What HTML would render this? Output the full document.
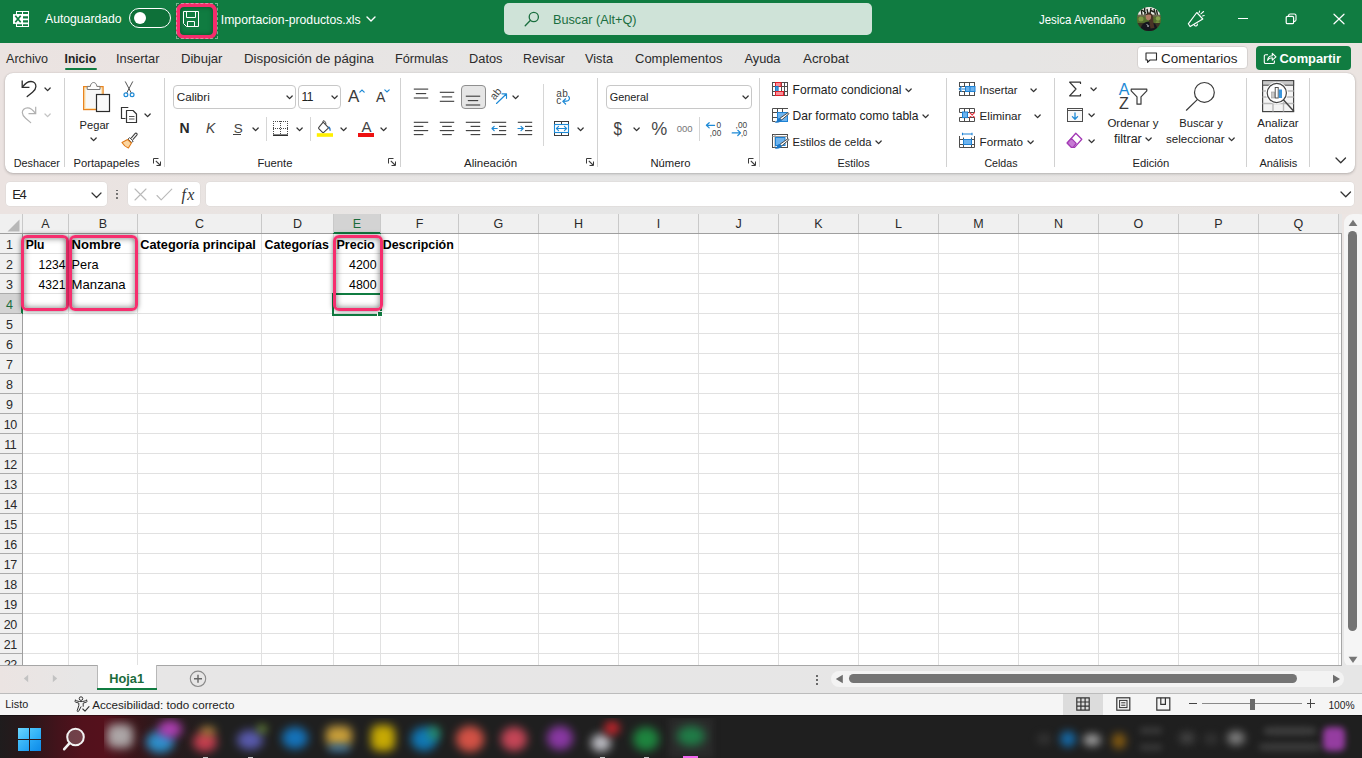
<!DOCTYPE html>
<html lang="es"><head><meta charset="utf-8"><title>Importacion-productos.xls - Excel</title>
<style>
html,body{margin:0;padding:0;}
body{width:1362px;height:758px;overflow:hidden;position:relative;background:#e6e6e6;font-family:"Liberation Sans",sans-serif;}
.t{position:absolute;white-space:nowrap;font-family:"Liberation Sans",sans-serif;}
svg{overflow:visible;}
.tx{position:absolute;left:0;top:0;}
div{box-sizing:content-box;}
</style></head><body>
<div class="" style="position:absolute;left:0px;top:0px;width:1362px;height:43px;background:#107C41;"></div>
<svg style="position:absolute;left:12px;top:10px;" width="18" height="18" viewBox="0 0 18 18" fill="none"><rect x="4" y="1" width="13" height="16" fill="#fff"/>
    <path d="M5 2h5v1.900H5zM11 2h5v1.900h-5zM11 6.300h5v2.300h-5zM11 10.200h5v2.400h-5zM5 14.200h5v1.700H5zM11 14.200h5v1.700h-5z" fill="#107C41"/>
    <rect x="1" y="4.100" width="9.600" height="9.800" fill="#fff"/>
    <path d="M3.300 5.700l5.400 6.500M8.700 5.700l-5.400 6.500" stroke="#107C41" stroke-width="1.700"/></svg>
<svg class="tx" width="1" height="1"><text x="45.0" y="23" font-family="Liberation Sans, sans-serif" font-size="12.19" letter-spacing="0.00" fill="#fff">Autoguardado</text></svg>
<div class="" style="position:absolute;left:129px;top:8px;width:40px;height:18px;border:1px solid #fff;border-radius:10px;background:#0e7039;"></div>
<div class="" style="position:absolute;left:134px;top:12px;width:12px;height:12px;border-radius:50%;background:#fff;"></div>
<div class="" style="position:absolute;left:175.8px;top:3.4px;width:33.7px;height:27.7px;border:4px solid #f72c6c;border-radius:8px;box-shadow:0 0 2px rgba(0,0,0,.3), inset 0 0 5px rgba(0,0,0,.38);"></div>
<div class="" style="position:absolute;left:175.5px;top:3px;width:42px;height:36px;border:1px dashed rgba(200,225,210,.55);box-sizing:border-box;"></div>
<svg style="position:absolute;left:183px;top:11px;" width="16" height="16" viewBox="0 0 16 16" fill="none"><path d="M.5 .5h15v15h-12l-3-3z" stroke="#fff" stroke-width="1" fill="none"/><path d="M3.500 .5v6h9v-6M4.500 15.500v-5h7v5" stroke="#fff" stroke-width="1" fill="none"/></svg>
<svg class="tx" width="1" height="1"><text x="220.8" y="24" font-family="Liberation Sans, sans-serif" font-size="12.22" letter-spacing="0.00" fill="#fff">Importacion-productos.xls</text></svg>
<svg style="position:absolute;left:365.5px;top:16.0px" width="10" height="6" viewBox="0 0 10 6" fill="none"><path d="M1 1 L5.0 5 L9 1" stroke="#fff" stroke-width="1.4" stroke-linecap="round" stroke-linejoin="round"/></svg>
<div class="" style="position:absolute;left:504px;top:3px;width:368px;height:32px;background:#cfe3d8;border-radius:5px;"></div>
<svg style="position:absolute;left:524px;top:11px;" width="16" height="16" viewBox="0 0 16 16" fill="none"><circle cx="9.8" cy="6" r="4.6" stroke="#1a6e3f" stroke-width="1.3"/><path d="M6.5 9.3L1.2 14.8" stroke="#1a6e3f" stroke-width="1.3" stroke-linecap="round"/></svg>
<svg class="tx" width="1" height="1"><text x="553.0" y="24" font-family="Liberation Sans, sans-serif" font-size="12.7" letter-spacing="-0.00" fill="#1a6e3f">Buscar (Alt+Q)</text></svg>
<svg class="tx" width="1" height="1"><text x="1038.9" y="24" font-family="Liberation Sans, sans-serif" font-size="12.15" letter-spacing="0.00" fill="#fff" textLength="86.60" lengthAdjust="spacingAndGlyphs">Jesica Avendaño</text></svg>
<svg style="position:absolute;left:1137px;top:7px;" width="24" height="24" viewBox="0 0 24 24" fill="none"><defs><clipPath id="avc"><circle cx="12" cy="12" r="12"/></clipPath></defs>
    <g clip-path="url(#avc)"><rect width="24" height="24" fill="#4c5a30"/>
    <rect width="24" height="8" fill="#e9ebe6"/>
    <path d="M4 1l1 7M7.500 0l.5 8M10 2l1 5M14 1l-1 6M17 2l1.500 6M19.500 3l1 5M5 3l4 3M13 3l4 2" stroke="#1d2218" stroke-width="1.400"/>
    <rect y="7.600" width="24" height="2.200" fill="#6e6a52"/>
    <rect y="9.800" width="24" height="8" fill="#55702e"/>
    <circle cx="4" cy="12" r="2.500" fill="#7c9a44"/><circle cx="21" cy="11.500" r="2.200" fill="#86a34e"/><circle cx="20.500" cy="16" r="2" fill="#6f8c3c"/>
    <rect y="16" width="24" height="8" fill="#3a3424"/>
    <path d="M3.500 24c0-6 3.500-9.500 8.500-9.500s8.500 3.500 8.500 9.500z" fill="#15171e"/>
    <path d="M12.500 6.500c3 0 4 2.500 3.800 5.500-.2 3 .5 6 1.200 9l-4 .5-1.500-8z" fill="#4a3326"/>
    <ellipse cx="11.400" cy="9.800" rx="2.700" ry="3.400" fill="#b07a66"/>
    <path d="M8.700 8.200c.5-2 2-2.900 3.700-2.700 1.500.2 2.300 1.200 2.400 2.600-1.800-.8-4-.8-6.100.1z" fill="#3a2a20"/>
    <path d="M9.600 17.500l2 1.300-1 1.200" stroke="#cfd6da" stroke-width="1" fill="none"/></g></svg>
<svg style="position:absolute;left:1187px;top:10px;" width="19" height="18" viewBox="0 0 19 18" fill="none"><path d="M1.300 13.800L9.800 2.500l6 6.500L3.200 16.600z" stroke="#fff" stroke-width="1.150" stroke-linejoin="round"/>
    <path d="M7 14.400c.2 1.300 1.500 1.900 2.600 1.300.8-.4 1-1.300.7-2.100" stroke="#fff" stroke-width="1.100"/>
    <path d="M12.100 2.500l.5-1.400M13.900 3.900l2.700-2.400M15.500 6l1.700-.4" stroke="#fff" stroke-width="1.050" stroke-linecap="round"/></svg>
<div class="" style="position:absolute;left:1238px;top:18px;width:10px;height:1.2px;background:#fff;"></div>
<svg style="position:absolute;left:1285px;top:13px;" width="12" height="12" viewBox="0 0 12 12" fill="none"><rect x="1.200" y="3.400" width="7.400" height="7.300" rx="1.300" stroke="#fff" stroke-width="1.200"/><path d="M3.6 3V2.6A1.6 1.6 0 0 1 5.2 1h4.2a1.6 1.6 0 0 1 1.6 1.6v4.2a1.6 1.6 0 0 1-1.6 1.6H9" stroke="#fff" stroke-width="1.1"/></svg>
<svg style="position:absolute;left:1333px;top:13px;" width="12" height="12" viewBox="0 0 12 12" fill="none"><path d="M1 1.2l10 9.6M11 1.2L1 10.8" stroke="#fff" stroke-width="1.2" stroke-linecap="round"/></svg>
<div class="" style="position:absolute;left:0px;top:43px;width:1362px;height:171px;background:linear-gradient(90deg,#ebe3e1 0%,#e9e4e2 18%,#e6e6e6 40%,#e6e5e4 75%,#ebe4e1 100%);"></div>
<svg class="tx" width="1" height="1"><text x="6.0" y="63" font-family="Liberation Sans, sans-serif" font-size="12.6" letter-spacing="0.00" fill="#2b2b2b" textLength="42.00" lengthAdjust="spacingAndGlyphs">Archivo</text></svg>
<svg class="tx" width="1" height="1"><text x="64.6" y="63" font-family="Liberation Sans, sans-serif" font-size="12.6" letter-spacing="0.00" fill="#1f1f1f" font-weight="bold" textLength="31.40" lengthAdjust="spacingAndGlyphs">Inicio</text></svg>
<svg class="tx" width="1" height="1"><text x="116.0" y="63" font-family="Liberation Sans, sans-serif" font-size="12.83" letter-spacing="0.00" fill="#2b2b2b">Insertar</text></svg>
<svg class="tx" width="1" height="1"><text x="181.0" y="63" font-family="Liberation Sans, sans-serif" font-size="13.1" letter-spacing="-0.00" fill="#2b2b2b">Dibujar</text></svg>
<svg class="tx" width="1" height="1"><text x="244.0" y="63" font-family="Liberation Sans, sans-serif" font-size="13.29" letter-spacing="-0.00" fill="#2b2b2b">Disposición de página</text></svg>
<svg class="tx" width="1" height="1"><text x="395.0" y="63" font-family="Liberation Sans, sans-serif" font-size="12.72" letter-spacing="-0.00" fill="#2b2b2b">Fórmulas</text></svg>
<svg class="tx" width="1" height="1"><text x="469.0" y="63" font-family="Liberation Sans, sans-serif" font-size="12.82" letter-spacing="0.00" fill="#2b2b2b">Datos</text></svg>
<svg class="tx" width="1" height="1"><text x="523.0" y="63" font-family="Liberation Sans, sans-serif" font-size="12.6" letter-spacing="0.00" fill="#2b2b2b" textLength="42.00" lengthAdjust="spacingAndGlyphs">Revisar</text></svg>
<svg class="tx" width="1" height="1"><text x="585.0" y="63" font-family="Liberation Sans, sans-serif" font-size="12.7" letter-spacing="-0.00" fill="#2b2b2b">Vista</text></svg>
<svg class="tx" width="1" height="1"><text x="635.0" y="63" font-family="Liberation Sans, sans-serif" font-size="13.01" letter-spacing="0.00" fill="#2b2b2b">Complementos</text></svg>
<svg class="tx" width="1" height="1"><text x="744.5" y="63" font-family="Liberation Sans, sans-serif" font-size="12.78" letter-spacing="-0.00" fill="#2b2b2b">Ayuda</text></svg>
<svg class="tx" width="1" height="1"><text x="803.0" y="63" font-family="Liberation Sans, sans-serif" font-size="13.35" letter-spacing="-0.00" fill="#2b2b2b">Acrobat</text></svg>
<div class="" style="position:absolute;left:64.5px;top:67.5px;width:32px;height:2.4px;background:#107C41;border-radius:1px;"></div>
<div class="" style="position:absolute;left:1137px;top:46px;width:108.5px;height:21.2px;background:#fff;border:1px solid #d6d2d0;border-radius:4px;"></div>
<svg style="position:absolute;left:1145px;top:52px;" width="13" height="12" viewBox="0 0 13 12" fill="none"><path d="M1 1h10.5v7H5L2.6 10.4V8H1z" stroke="#2b2b2b" stroke-width="1.1" stroke-linejoin="round"/></svg>
<svg class="tx" width="1" height="1"><text x="1161.0" y="63" font-family="Liberation Sans, sans-serif" font-size="13.49" letter-spacing="0.00" fill="#1f1f1f">Comentarios</text></svg>
<div class="" style="position:absolute;left:1256px;top:46px;width:95px;height:24px;background:#107C41;border-radius:4px;"></div>
<svg style="position:absolute;left:1263px;top:51px;" width="14" height="14" viewBox="0 0 14 14" fill="none"><path d="M5 3.8H2.6A1.3 1.3 0 0 0 1.3 5.100v6.1a1.300 1.300 0 0 0 1.300 1.300h7.500a1.300 1.300 0 0 0 1.300-1.300V9.500" stroke="#fff" stroke-width="1.1"/><path d="M4.600 9.300c.300-2.800 2-4.400 4.700-4.500V2.300L13 5.800 9.300 9.200V6.800c-2 0-3.500.700-4.700 2.500z" stroke="#fff" stroke-width="1.1" stroke-linejoin="round"/></svg>
<svg class="tx" width="1" height="1"><text x="1279.5" y="63" font-family="Liberation Sans, sans-serif" font-size="12.87" letter-spacing="0.00" fill="#fff" font-weight="bold">Compartir</text></svg>
<div class="" style="position:absolute;left:5.5px;top:181.7px;width:101px;height:24.4px;background:#fff;border-radius:4px;box-shadow:0 0 0 .5px #dcd8d6;"></div>
<svg class="tx" width="1" height="1"><text x="12.3" y="199" font-family="Liberation Sans, sans-serif" font-size="13" letter-spacing="-1.50" fill="#222">E4</text></svg>
<svg style="position:absolute;left:90.5px;top:191.6px" width="11" height="6.5" viewBox="0 0 11 6.5" fill="none"><path d="M1 1 L5.5 5.5 L10 1" stroke="#333" stroke-width="1.2" stroke-linecap="round" stroke-linejoin="round"/></svg>
<div class="" style="position:absolute;left:115.9px;top:189.6px;width:1.8px;height:1.8px;background:#555;border-radius:50%;"></div>
<div class="" style="position:absolute;left:115.9px;top:193.4px;width:1.8px;height:1.8px;background:#555;border-radius:50%;"></div>
<div class="" style="position:absolute;left:115.9px;top:197.2px;width:1.8px;height:1.8px;background:#555;border-radius:50%;"></div>
<div class="" style="position:absolute;left:127.5px;top:181.7px;width:72.5px;height:24.4px;background:#fff;border-radius:4px;box-shadow:0 0 0 .5px #dcd8d6;"></div>
<svg style="position:absolute;left:134px;top:188px;" width="13" height="13" viewBox="0 0 13 13" fill="none"><path d="M1 1l11 11M12 1L1 12" stroke="#b9b9b9" stroke-width="1.100" stroke-linecap="round"/></svg>
<svg style="position:absolute;left:156px;top:188px;" width="17" height="13" viewBox="0 0 17 13" fill="none"><path d="M1 7.500l4.200 4.300L15.800 1.200" stroke="#b9b9b9" stroke-width="1.100" stroke-linecap="round" stroke-linejoin="round" fill="none"/></svg>
<svg class="tx" width="1" height="1"><text x="181.6" y="200" font-family="Liberation Serif, serif" font-size="16" letter-spacing="1.18" fill="#333" font-style="italic">fx</text></svg>
<div class="" style="position:absolute;left:205.5px;top:181.7px;width:1148.5px;height:24.4px;background:#fff;border-radius:4px;box-shadow:0 0 0 .5px #dcd8d6;"></div>
<svg style="position:absolute;left:1339.8px;top:191.4px" width="11.5" height="6.8" viewBox="0 0 11.5 6.8" fill="none"><path d="M1 1 L5.75 5.8 L10.5 1" stroke="#333" stroke-width="1.3" stroke-linecap="round" stroke-linejoin="round"/></svg>
<div class="" style="position:absolute;left:5px;top:73px;width:1350px;height:100px;background:#fff;border-radius:8px;box-shadow:0 1px 3px rgba(0,0,0,.22),0 0 1px rgba(0,0,0,.2);"></div>
<svg style="position:absolute;left:21px;top:80px;" width="16" height="18" viewBox="0 0 16 18" fill="none"><path d="M1.200 1.100v6.200h6.600" stroke="#2b2b2b" stroke-width="1.300" stroke-linecap="square" stroke-linejoin="miter"/><path d="M1.600 6.900C4 3.500 7 1.500 10 1.500c3 0 4.900 2.300 4.900 5 0 2.500-1.400 4-3.400 5.700L6.200 16.600" stroke="#2b2b2b" stroke-width="1.300" stroke-linecap="round"/></svg>
<svg style="position:absolute;left:43.9px;top:87.0px" width="7.2" height="4.6" viewBox="0 0 7.2 4.6" fill="none"><path d="M1 1 L3.6 3.6 L6.2 1" stroke="#333" stroke-width="1.3" stroke-linecap="round" stroke-linejoin="round"/></svg>
<svg style="position:absolute;left:21px;top:107px;" width="16" height="17" viewBox="0 0 16 17" fill="none"><path d="M14.700 .3v6.300H8.100" stroke="#b0b0b0" stroke-width="1.200" stroke-linecap="square"/><path d="M14.300 6.200C12 2.800 9.500 .8 6.500 .8c-3 0-5.200 2.200-5.200 4.800 0 2.400 1.300 3.900 3.300 5.600l5.100 4.400" stroke="#b0b0b0" stroke-width="1.200" stroke-linecap="round"/></svg>
<svg style="position:absolute;left:43.9px;top:113.0px" width="7.2" height="4.6" viewBox="0 0 7.2 4.6" fill="none"><path d="M1 1 L3.6 3.6 L6.2 1" stroke="#c4c4c4" stroke-width="1.3" stroke-linecap="round" stroke-linejoin="round"/></svg>
<svg class="tx" width="1" height="1"><text x="13.7" y="167" font-family="Liberation Sans, sans-serif" font-size="10.82" letter-spacing="-0.00" fill="#222">Deshacer</text></svg>
<div class="" style="position:absolute;left:64px;top:78px;width:1px;height:89px;background:#d1d1d1;"></div>
<svg style="position:absolute;left:82px;top:81px;" width="29" height="32" viewBox="0 0 29 32" fill="none"><rect x="1.600" y="5.600" width="19.500" height="23" fill="#fbe3b4" stroke="#e8831f" stroke-width="1.200"/>
    <rect x="3.600" y="7.600" width="15.500" height="19.400" fill="#f8f8f8"/>
    <path d="M5.200 8.500V5.400h3.100C8.600 3.100 9.800 1.500 11.600 1.500s3 1.600 3.300 3.900H18v3.100z" fill="#fdfdfd" stroke="#7a7a7a" stroke-width="1"/>
    <rect x="14.500" y="13.500" width="13" height="17" fill="#fafafa" stroke="#2b2b2b" stroke-width="1.200"/></svg>
<svg class="tx" width="1" height="1"><text x="79.6" y="129" font-family="Liberation Sans, sans-serif" font-size="11.7" letter-spacing="0.00" fill="#222" textLength="29.70" lengthAdjust="spacingAndGlyphs">Pegar</text></svg>
<svg style="position:absolute;left:90.0px;top:137.1px" width="7.2" height="4.6" viewBox="0 0 7.2 4.6" fill="none"><path d="M1 1 L3.6 3.6 L6.2 1" stroke="#333" stroke-width="1.3" stroke-linecap="round" stroke-linejoin="round"/></svg>
<svg style="position:absolute;left:123px;top:81px;" width="12" height="17" viewBox="0 0 12 17" fill="none"><path d="M2.400 .8l5.900 11.200M9.600 .8L3.700 12" stroke="#555" stroke-width="1" stroke-linecap="round"/><circle cx="2.900" cy="13.800" r="1.900" stroke="#1e8ad6" stroke-width="1.200"/><circle cx="9.100" cy="13.800" r="1.900" stroke="#1e8ad6" stroke-width="1.200"/></svg>
<svg style="position:absolute;left:120px;top:106px;" width="18" height="18" viewBox="0 0 18 18" fill="none"><path d="M5.500 12.500h-4V1.500h6.800" stroke="#333" stroke-width="1.200" fill="none"/><path d="M6.500 4.500h6.500l3.500 3.500v8.500h-10z" stroke="#333" stroke-width="1.200" fill="#fff" stroke-linejoin="round"/><path d="M9 10.500h5.500M9 13h5.500" stroke="#555" stroke-width="1"/></svg>
<svg style="position:absolute;left:143.9px;top:113.0px" width="7.2" height="4.6" viewBox="0 0 7.2 4.6" fill="none"><path d="M1 1 L3.6 3.6 L6.2 1" stroke="#333" stroke-width="1.3" stroke-linecap="round" stroke-linejoin="round"/></svg>
<svg style="position:absolute;left:121px;top:132px;" width="17" height="17" viewBox="0 0 17 17" fill="none"><path d="M10.200 6.200L14 1.600c.5-.6 1.300-.6 1.800-.1.500.5.500 1.200 0 1.700l-4 4.400" stroke="#444" stroke-width="1.100" fill="#fff"/><path d="M8.600 5.600l3.600 3.400-1.400 1.600-3.800-3.400z" stroke="#444" stroke-width="1" fill="#fff"/><path d="M6.600 7.600L1 10.400c1.500 2.600 3.800 4.600 6.400 5.600l3-5z" fill="#fbd5a0" stroke="#e07a18" stroke-width="1.100" stroke-linejoin="round"/></svg>
<svg class="tx" width="1" height="1"><text x="73.5" y="167" font-family="Liberation Sans, sans-serif" font-size="11.22" letter-spacing="-0.00" fill="#222">Portapapeles</text></svg>
<svg style="position:absolute;left:153px;top:158px;" width="8" height="8" viewBox="0 0 8 8" fill="none"><path d="M.5 5.500V.5h5" stroke="#3a3a3a" stroke-width="1"/><path d="M2.800 2.800L7 7" stroke="#3a3a3a" stroke-width="1.100"/><path d="M7.500 3.500v4h-4" stroke="#3a3a3a" stroke-width="1"/></svg>
<div class="" style="position:absolute;left:164px;top:78px;width:1px;height:89px;background:#d1d1d1;"></div>
<div class="" style="position:absolute;left:173px;top:85px;width:121px;height:21.5px;border:1px solid #c8c8c8;border-radius:4px;background:#fff;"></div>
<svg class="tx" width="1" height="1"><text x="176.7" y="101" font-family="Liberation Sans, sans-serif" font-size="11.71" letter-spacing="0.00" fill="#222">Calibri</text></svg>
<svg style="position:absolute;left:285.9px;top:95.0px" width="7.2" height="4.6" viewBox="0 0 7.2 4.6" fill="none"><path d="M1 1 L3.6 3.6 L6.2 1" stroke="#333" stroke-width="1.3" stroke-linecap="round" stroke-linejoin="round"/></svg>
<div class="" style="position:absolute;left:298px;top:85px;width:41px;height:21.5px;border:1px solid #c8c8c8;border-radius:4px;background:#fff;"></div>
<svg class="tx" width="1" height="1"><text x="301.5" y="101" font-family="Liberation Sans, sans-serif" font-size="12" letter-spacing="-0.48" fill="#222">11</text></svg>
<svg style="position:absolute;left:330.9px;top:95.0px" width="7.2" height="4.6" viewBox="0 0 7.2 4.6" fill="none"><path d="M1 1 L3.6 3.6 L6.2 1" stroke="#333" stroke-width="1.3" stroke-linecap="round" stroke-linejoin="round"/></svg>
<svg class="tx" width="1" height="1"><text x="348.0" y="102" font-family="Liberation Sans, sans-serif" font-size="17" letter-spacing="0.16" fill="#3a3a3a">A</text></svg>
<svg style="position:absolute;left:358.5px;top:88.5px;" width="6" height="4" viewBox="0 0 6 4" fill="none"><path d="M.8 3.200L3 1l2.200 2.200" stroke="#1e8ad6" stroke-width="1.200" stroke-linecap="round"/></svg>
<svg class="tx" width="1" height="1"><text x="376.0" y="102" font-family="Liberation Sans, sans-serif" font-size="14" letter-spacing="0.16" fill="#3a3a3a">A</text></svg>
<svg style="position:absolute;left:384px;top:88.5px;" width="6" height="4" viewBox="0 0 6 4" fill="none"><path d="M.8 .8L3 3 5.200.8" stroke="#1e8ad6" stroke-width="1.200" stroke-linecap="round"/></svg>
<svg class="tx" width="1" height="1"><text x="179.4" y="133" font-family="Liberation Sans, sans-serif" font-size="14" letter-spacing="-0.51" fill="#2a2a2a" font-weight="bold">N</text></svg>
<svg class="tx" width="1" height="1"><text x="206.0" y="133" font-family="Liberation Sans, sans-serif" font-size="14" letter-spacing="0.16" fill="#444" font-style="italic">K</text></svg>
<svg class="tx" width="1" height="1"><text x="233.8" y="133" font-family="Liberation Sans, sans-serif" font-size="13.5" letter-spacing="-2.60" fill="#444">S</text></svg>
<div class="" style="position:absolute;left:233px;top:133.6px;width:8px;height:1px;background:#444;"></div>
<svg style="position:absolute;left:251.8px;top:127.0px" width="7.2" height="4.6" viewBox="0 0 7.2 4.6" fill="none"><path d="M1 1 L3.6 3.6 L6.2 1" stroke="#333" stroke-width="1.3" stroke-linecap="round" stroke-linejoin="round"/></svg>
<div class="" style="position:absolute;left:266px;top:117px;width:1px;height:24px;background:#d6d6d6;"></div>
<svg style="position:absolute;left:273px;top:121px;" width="15" height="15" viewBox="0 0 15 15" fill="none"><path d="M0 .5h15M0 7.500h15M.5 0v13M7.500 0v13M14.500 0v13" stroke="#4a4a4a" stroke-width="1" stroke-dasharray="1 1"/><path d="M0 14.200h15" stroke="#222" stroke-width="1.500"/></svg>
<svg style="position:absolute;left:295.9px;top:127.0px" width="7.2" height="4.6" viewBox="0 0 7.2 4.6" fill="none"><path d="M1 1 L3.6 3.6 L6.2 1" stroke="#333" stroke-width="1.3" stroke-linecap="round" stroke-linejoin="round"/></svg>
<div class="" style="position:absolute;left:310px;top:117px;width:1px;height:24px;background:#d6d6d6;"></div>
<svg style="position:absolute;left:316px;top:120px;" width="18" height="18" viewBox="0 0 18 18" fill="none"><path d="M7.200 2.200l5.400 5.600-4.600 4.400c-.5.500-1.200.500-1.700 0L3 8.800c-.5-.5-.5-1.200 0-1.700z" stroke="#444" stroke-width="1.100" stroke-linejoin="round" fill="#fff"/><path d="M7.200 2.200c-.7-1.200.3-2 1.200-1.300.9.700 1.500 2 1.600 3.400" stroke="#444" stroke-width="1" fill="none"/><path d="M12.800 6.200c1.500.9 2.100 2.300 1.800 4.200-.1.700-.9.700-1 0-.2-1.400-.6-2.500-1.400-3.300z" fill="#1e6fc0"/><rect x=".8" y="13.200" width="16.200" height="3.600" fill="#ffef00"/></svg>
<svg style="position:absolute;left:339.7px;top:127.0px" width="7.2" height="4.6" viewBox="0 0 7.2 4.6" fill="none"><path d="M1 1 L3.6 3.6 L6.2 1" stroke="#333" stroke-width="1.3" stroke-linecap="round" stroke-linejoin="round"/></svg>
<svg class="tx" width="1" height="1"><text x="361.4" y="132" font-family="Liberation Sans, sans-serif" font-size="15" letter-spacing="-0.20" fill="#444">A</text></svg>
<div class="" style="position:absolute;left:358px;top:133.2px;width:16px;height:3.6px;background:#ee1111;"></div>
<svg style="position:absolute;left:380.4px;top:127.0px" width="7.2" height="4.6" viewBox="0 0 7.2 4.6" fill="none"><path d="M1 1 L3.6 3.6 L6.2 1" stroke="#333" stroke-width="1.3" stroke-linecap="round" stroke-linejoin="round"/></svg>
<svg class="tx" width="1" height="1"><text x="257.4" y="167" font-family="Liberation Sans, sans-serif" font-size="11.27" letter-spacing="0.00" fill="#222">Fuente</text></svg>
<svg style="position:absolute;left:388px;top:158px;" width="8" height="8" viewBox="0 0 8 8" fill="none"><path d="M.5 5.500V.5h5" stroke="#3a3a3a" stroke-width="1"/><path d="M2.800 2.800L7 7" stroke="#3a3a3a" stroke-width="1.100"/><path d="M7.500 3.500v4h-4" stroke="#3a3a3a" stroke-width="1"/></svg>
<div class="" style="position:absolute;left:400px;top:78px;width:1px;height:89px;background:#d1d1d1;"></div>
<svg style="position:absolute;left:413px;top:86px;" width="16" height="14" viewBox="0 0 16 14" fill="none"><path d="M0.8 3.1h14.4" stroke="#3a3a3a" stroke-width="1.1"/><path d="M2.8 7.6h10.4" stroke="#3a3a3a" stroke-width="1.1"/><path d="M0.8 12h14.4" stroke="#3a3a3a" stroke-width="1.1"/></svg>
<svg style="position:absolute;left:439px;top:90px;" width="16" height="14" viewBox="0 0 16 14" fill="none"><path d="M0.8 2.3h14.4" stroke="#3a3a3a" stroke-width="1.1"/><path d="M2.8 6.9h10.4" stroke="#3a3a3a" stroke-width="1.1"/><path d="M0.8 11.3h14.4" stroke="#3a3a3a" stroke-width="1.1"/></svg>
<div class="" style="position:absolute;left:461px;top:85px;width:22.5px;height:22px;background:#e6e6e6;border:1px solid #8f8f8f;border-radius:4px;"></div>
<svg style="position:absolute;left:465px;top:93px;" width="16" height="14" viewBox="0 0 16 14" fill="none"><path d="M0.8 3.2h14.4" stroke="#3a3a3a" stroke-width="1.1"/><path d="M2.8 7.6h10.4" stroke="#3a3a3a" stroke-width="1.1"/><path d="M0.8 12h14.4" stroke="#3a3a3a" stroke-width="1.1"/></svg>
<svg style="position:absolute;left:490px;top:88px;" width="19" height="19" viewBox="0 0 19 19" fill="none"><text x="0" y="0" font-family="Liberation Sans, sans-serif" font-size="10.500" fill="#444" transform="translate(4.800 12.500) rotate(-52)">ab</text><path d="M6.500 15.500L16.300 6M12 5.800h4.500v4.500" stroke="#1e8ad6" stroke-width="1.150" stroke-linecap="round" stroke-linejoin="round" fill="none"/></svg>
<svg style="position:absolute;left:511.9px;top:95.0px" width="7.2" height="4.6" viewBox="0 0 7.2 4.6" fill="none"><path d="M1 1 L3.6 3.6 L6.2 1" stroke="#333" stroke-width="1.3" stroke-linecap="round" stroke-linejoin="round"/></svg>
<div class="" style="position:absolute;left:543px;top:84px;width:1px;height:61.5px;background:#d6d6d6;"></div>
<svg style="position:absolute;left:555px;top:88px;" width="17" height="19" viewBox="0 0 17 19" fill="none"><text x="1.200" y="8.600" font-family="Liberation Sans, sans-serif" font-size="10" letter-spacing=".4" fill="#444">ab</text><text x="1.200" y="15.800" font-family="Liberation Sans, sans-serif" font-size="10" fill="#444">c</text><path d="M13.600 8.500c1.300 1.200 1.100 3-.2 4-1.100.8-2.600.9-5.200.9M10.600 10.800L7.800 13.400l2.800 2.600" stroke="#1e8ad6" stroke-width="1.200" fill="none" stroke-linecap="round" stroke-linejoin="round"/></svg>
<svg style="position:absolute;left:413px;top:120px;" width="16" height="17" viewBox="0 0 16 17" fill="none"><path d="M0.8 2.3h14.4" stroke="#3a3a3a" stroke-width="1.1"/><path d="M0.8 6.4h9.6" stroke="#3a3a3a" stroke-width="1.1"/><path d="M0.8 10.6h14.4" stroke="#3a3a3a" stroke-width="1.1"/><path d="M0.8 14.6h9.6" stroke="#3a3a3a" stroke-width="1.1"/></svg>
<svg style="position:absolute;left:439px;top:120px;" width="16" height="17" viewBox="0 0 16 17" fill="none"><path d="M0.8 2.3h14.4" stroke="#3a3a3a" stroke-width="1.1"/><path d="M3.2 6.4h9.6" stroke="#3a3a3a" stroke-width="1.1"/><path d="M0.8 10.6h14.4" stroke="#3a3a3a" stroke-width="1.1"/><path d="M3.2 14.6h9.6" stroke="#3a3a3a" stroke-width="1.1"/></svg>
<svg style="position:absolute;left:465px;top:120px;" width="16" height="17" viewBox="0 0 16 17" fill="none"><path d="M0.8 2.3h14.4" stroke="#3a3a3a" stroke-width="1.1"/><path d="M5.6 6.4h9.6" stroke="#3a3a3a" stroke-width="1.1"/><path d="M0.8 10.6h14.4" stroke="#3a3a3a" stroke-width="1.1"/><path d="M5.6 14.6h9.6" stroke="#3a3a3a" stroke-width="1.1"/></svg>
<svg style="position:absolute;left:491px;top:120px;" width="16" height="17" viewBox="0 0 16 17" fill="none"><path d="M0.8 2.3h14.4" stroke="#3a3a3a" stroke-width="1.1"/><path d="M8 6.4h7.2" stroke="#3a3a3a" stroke-width="1.1"/><path d="M8 10.6h7.2" stroke="#3a3a3a" stroke-width="1.1"/><path d="M0.8 14.6h14.4" stroke="#3a3a3a" stroke-width="1.1"/><path d="M6.200 8.500H1.200M3.200 6.300L1 8.500l2.200 2.200" stroke="#1e8ad6" stroke-width="1.200" fill="none" stroke-linecap="round" stroke-linejoin="round"/></svg>
<svg style="position:absolute;left:517px;top:120px;" width="16" height="17" viewBox="0 0 16 17" fill="none"><path d="M0.8 2.3h14.4" stroke="#3a3a3a" stroke-width="1.1"/><path d="M8 6.4h7.2" stroke="#3a3a3a" stroke-width="1.1"/><path d="M8 10.6h7.2" stroke="#3a3a3a" stroke-width="1.1"/><path d="M0.8 14.6h14.4" stroke="#3a3a3a" stroke-width="1.1"/><path d="M1 8.500h5M4 6.300l2.200 2.200L4 10.700" stroke="#1e8ad6" stroke-width="1.200" fill="none" stroke-linecap="round" stroke-linejoin="round"/></svg>
<svg style="position:absolute;left:554px;top:121px;" width="15" height="15" viewBox="0 0 15 15" fill="none"><rect x=".5" y=".5" width="14" height="14" stroke="#3d3d3d" stroke-width="1" fill="#fff"/><path d="M7.500 .5v3M7.500 11.500v3" stroke="#3d3d3d" stroke-width="1"/><rect x=".5" y="3.500" width="14" height="8" fill="#fff" stroke="#1e8ad6" stroke-width="1.100"/><path d="M2.500 7.500h10M4.600 5.400L2.400 7.500l2.200 2.100M10.400 5.400l2.200 2.100-2.200 2.100" stroke="#1e8ad6" stroke-width="1.100" fill="none" stroke-linecap="round" stroke-linejoin="round"/></svg>
<svg style="position:absolute;left:577.0px;top:127.0px" width="7.2" height="4.6" viewBox="0 0 7.2 4.6" fill="none"><path d="M1 1 L3.6 3.6 L6.2 1" stroke="#333" stroke-width="1.3" stroke-linecap="round" stroke-linejoin="round"/></svg>
<svg class="tx" width="1" height="1"><text x="464.0" y="167" font-family="Liberation Sans, sans-serif" font-size="11.53" letter-spacing="-0.00" fill="#222">Alineación</text></svg>
<svg style="position:absolute;left:586px;top:158px;" width="8" height="8" viewBox="0 0 8 8" fill="none"><path d="M.5 5.500V.5h5" stroke="#3a3a3a" stroke-width="1"/><path d="M2.800 2.800L7 7" stroke="#3a3a3a" stroke-width="1.100"/><path d="M7.500 3.500v4h-4" stroke="#3a3a3a" stroke-width="1"/></svg>
<div class="" style="position:absolute;left:597px;top:78px;width:1px;height:89px;background:#d1d1d1;"></div>
<div class="" style="position:absolute;left:606px;top:85px;width:144px;height:21.5px;border:1px solid #c8c8c8;border-radius:4px;background:#fff;"></div>
<svg class="tx" width="1" height="1"><text x="609.7" y="101" font-family="Liberation Sans, sans-serif" font-size="11.7" letter-spacing="0.00" fill="#222" textLength="38.80" lengthAdjust="spacingAndGlyphs">General</text></svg>
<svg style="position:absolute;left:741.6px;top:95.0px" width="7.2" height="4.6" viewBox="0 0 7.2 4.6" fill="none"><path d="M1 1 L3.6 3.6 L6.2 1" stroke="#333" stroke-width="1.3" stroke-linecap="round" stroke-linejoin="round"/></svg>
<svg class="tx" width="1" height="1"><text x="613.4" y="135" font-family="Liberation Sans, sans-serif" font-size="18" letter-spacing="0.00" fill="#3f3f3f" textLength="8.50" lengthAdjust="spacingAndGlyphs">$</text></svg>
<svg style="position:absolute;left:632.9px;top:127.0px" width="7.2" height="4.6" viewBox="0 0 7.2 4.6" fill="none"><path d="M1 1 L3.6 3.6 L6.2 1" stroke="#333" stroke-width="1.3" stroke-linecap="round" stroke-linejoin="round"/></svg>
<svg class="tx" width="1" height="1"><text x="651.3" y="135" font-family="Liberation Sans, sans-serif" font-size="18" letter-spacing="-0.60" fill="#4a4a4a">%</text></svg>
<svg class="tx" width="1" height="1"><text x="676.7" y="132" font-family="Liberation Sans, sans-serif" font-size="9.53" letter-spacing="-0.00" fill="#777">000</text></svg>
<div class="" style="position:absolute;left:699px;top:117px;width:1px;height:24px;background:#d6d6d6;"></div>
<svg style="position:absolute;left:705px;top:120px;" width="17" height="18" viewBox="0 0 17 18" fill="none"><text x="11.600" y="7.500" font-family="Liberation Sans, sans-serif" font-size="9.800" fill="#444" lengthAdjust="spacingAndGlyphs" textLength="4.600">0</text><text x="4.800" y="16.200" font-family="Liberation Sans, sans-serif" font-size="9.800" fill="#444" lengthAdjust="spacingAndGlyphs" textLength="11.400">,00</text><path d="M9.600 5.300H1.600M4.200 2.700L1.400 5.300l2.800 2.600" stroke="#1e8ad6" stroke-width="1.200" fill="none" stroke-linecap="round" stroke-linejoin="round"/></svg>
<svg style="position:absolute;left:731px;top:120px;" width="17" height="18" viewBox="0 0 17 18" fill="none"><text x="4.600" y="7.500" font-family="Liberation Sans, sans-serif" font-size="9.800" fill="#444" lengthAdjust="spacingAndGlyphs" textLength="11.500">,00</text><text x="9.900" y="16.200" font-family="Liberation Sans, sans-serif" font-size="9.800" fill="#444" lengthAdjust="spacingAndGlyphs" textLength="6.200">,0</text><path d="M1.200 12.900H9.400M6.800 10.300l2.800 2.600-2.800 2.600" stroke="#1e8ad6" stroke-width="1.200" fill="none" stroke-linecap="round" stroke-linejoin="round"/></svg>
<svg class="tx" width="1" height="1"><text x="650.4" y="167" font-family="Liberation Sans, sans-serif" font-size="11.25" letter-spacing="-0.00" fill="#222">Número</text></svg>
<svg style="position:absolute;left:748px;top:158px;" width="8" height="8" viewBox="0 0 8 8" fill="none"><path d="M.5 5.500V.5h5" stroke="#3a3a3a" stroke-width="1"/><path d="M2.800 2.800L7 7" stroke="#3a3a3a" stroke-width="1.100"/><path d="M7.500 3.500v4h-4" stroke="#3a3a3a" stroke-width="1"/></svg>
<div class="" style="position:absolute;left:759px;top:78px;width:1px;height:89px;background:#d1d1d1;"></div>
<svg style="position:absolute;left:772px;top:82px;" width="16" height="14" viewBox="0 0 16 14" fill="none"><rect x=".5" y=".5" width="15" height="13" fill="#fff" stroke="#4d4d4d"/><path d="M3.500 .5v13M9.500 .5v13M12.500 .5v13M.5 4.500h15M.5 9.500h15" stroke="#4d4d4d" stroke-width="1"/><rect x="3.500" y=".5" width="5.500" height="4" fill="#f7909a" stroke="#e0202a"/><rect x="3.500" y="4.500" width="2.600" height="5" fill="#3f9be0" stroke="#1b78c4"/><rect x="3.500" y="9.500" width="8" height="4" fill="#f7909a" stroke="#e0202a"/></svg>
<svg class="tx" width="1" height="1"><text x="792.6" y="94" font-family="Liberation Sans, sans-serif" font-size="12.09" letter-spacing="0.00" fill="#222">Formato condicional</text></svg>
<svg style="position:absolute;left:904.9px;top:88.2px" width="7.2" height="4.6" viewBox="0 0 7.2 4.6" fill="none"><path d="M1 1 L3.6 3.6 L6.2 1" stroke="#333" stroke-width="1.3" stroke-linecap="round" stroke-linejoin="round"/></svg>
<svg style="position:absolute;left:772px;top:108px;" width="17" height="15" viewBox="0 0 17 15" fill="none"><path d="M.5 13.500V.5h15.500M5.500 .5v9M10.500 .5v4M.5 4.500h15M.5 9.500h5" stroke="#4d4d4d" stroke-width="1" fill="none"/><rect x="5.500" y="4.500" width="10" height="9" fill="#6db3ee" stroke="#1e82d4"/><path d="M.5 13.500h3" stroke="#4d4d4d"/><path d="M16.100 4.600l.9 1.100-7.400 6.300-1.700-1.700z" fill="#fff" stroke="#4a4a4a" stroke-width="1" stroke-linejoin="round"/><path d="M7.700 10l2.200 2.200c-1 2-3.600 2.900-7.300 2.300 1.600-.6 2.300-1.500 2.700-2.700.4-1.200 1.300-2 2.400-1.800z" fill="#1b78c8"/></svg>
<svg class="tx" width="1" height="1"><text x="792.6" y="120" font-family="Liberation Sans, sans-serif" font-size="12.06" letter-spacing="0.00" fill="#222">Dar formato como tabla</text></svg>
<svg style="position:absolute;left:922.2px;top:113.7px" width="7.2" height="4.6" viewBox="0 0 7.2 4.6" fill="none"><path d="M1 1 L3.6 3.6 L6.2 1" stroke="#333" stroke-width="1.3" stroke-linecap="round" stroke-linejoin="round"/></svg>
<svg style="position:absolute;left:772px;top:134px;" width="17" height="15" viewBox="0 0 17 15" fill="none"><rect x=".5" y=".5" width="15" height="13" fill="#fff" stroke="#4d4d4d"/><path d="M.5 2.500h15M3 .5v13" stroke="#9a9a9a" stroke-width="1"/><rect x="3.500" y="3.500" width="9.500" height="8" fill="#6db3ee" stroke="#1e82d4"/><path d="M16.100 4.600l.9 1.100-7.400 6.300-1.700-1.700z" fill="#fff" stroke="#4a4a4a" stroke-width="1" stroke-linejoin="round"/><path d="M7.700 10l2.200 2.200c-1 2-3.600 2.900-7.300 2.300 1.600-.6 2.300-1.500 2.700-2.700.4-1.200 1.300-2 2.400-1.800z" fill="#1b78c8"/></svg>
<svg class="tx" width="1" height="1"><text x="792.6" y="146" font-family="Liberation Sans, sans-serif" font-size="11.7" letter-spacing="0.00" fill="#222" textLength="78.80" lengthAdjust="spacingAndGlyphs">Estilos de celda</text></svg>
<svg style="position:absolute;left:875.2px;top:139.7px" width="7.2" height="4.6" viewBox="0 0 7.2 4.6" fill="none"><path d="M1 1 L3.6 3.6 L6.2 1" stroke="#333" stroke-width="1.3" stroke-linecap="round" stroke-linejoin="round"/></svg>
<svg class="tx" width="1" height="1"><text x="837.5" y="167" font-family="Liberation Sans, sans-serif" font-size="10.9" letter-spacing="-0.00" fill="#222">Estilos</text></svg>
<div class="" style="position:absolute;left:946px;top:78px;width:1px;height:89px;background:#d1d1d1;"></div>
<svg style="position:absolute;left:959px;top:82px;" width="16" height="14" viewBox="0 0 16 14" fill="none"><rect x=".5" y=".5" width="15" height="13" fill="#fff" stroke="#4d4d4d"/><path d="M5.500 .5v13M10.500 .5v13M.5 4.500h15M.5 9.500h15" stroke="#4d4d4d"/><rect x="6.500" y="4.500" width="9.500" height="5" fill="#6db3ee" stroke="#1e82d4"/><path d="M11 4.500v5" stroke="#1e82d4"/><rect x="-.2" y="5" width="6.200" height="4" fill="#fff"/><path d="M6.300 7H.3M2.600 4.700L.2 7l2.400 2.300" stroke="#1e82d4" stroke-width="1.100" fill="none" stroke-linecap="round" stroke-linejoin="round"/></svg>
<svg class="tx" width="1" height="1"><text x="979.6" y="94" font-family="Liberation Sans, sans-serif" font-size="11.7" letter-spacing="0.00" fill="#222" textLength="37.90" lengthAdjust="spacingAndGlyphs">Insertar</text></svg>
<svg style="position:absolute;left:1030.0px;top:87.7px" width="7.2" height="4.6" viewBox="0 0 7.2 4.6" fill="none"><path d="M1 1 L3.6 3.6 L6.2 1" stroke="#333" stroke-width="1.3" stroke-linecap="round" stroke-linejoin="round"/></svg>
<svg style="position:absolute;left:959px;top:108px;" width="16" height="14" viewBox="0 0 16 14" fill="none"><path d="M.5 4.500V.5h15v4M.5 9.500v4h15v-4M5.500 .5v4M10.500 .5v4M5.500 9.500v4M10.500 9.500v4M.5 4.500h3M.5 9.500h3M8.500 4.500h7M8.500 9.500h7" stroke="#4d4d4d" fill="none"/><rect x="3.500" y="4" width="5" height="5.600" fill="#6db3ee" stroke="#1e82d4"/><path d="M10.800 4.600l4.700 4.700M15.500 4.600l-4.700 4.700" stroke="#e8323c" stroke-width="1.200" stroke-linecap="round"/></svg>
<svg class="tx" width="1" height="1"><text x="979.6" y="120" font-family="Liberation Sans, sans-serif" font-size="11.7" letter-spacing="0.00" fill="#222" textLength="41.80" lengthAdjust="spacingAndGlyphs">Eliminar</text></svg>
<svg style="position:absolute;left:1034.0px;top:113.7px" width="7.2" height="4.6" viewBox="0 0 7.2 4.6" fill="none"><path d="M1 1 L3.6 3.6 L6.2 1" stroke="#333" stroke-width="1.3" stroke-linecap="round" stroke-linejoin="round"/></svg>
<svg style="position:absolute;left:959px;top:132px;" width="16" height="16" viewBox="0 0 16 16" fill="none"><path d="M.5 4v11.500h15V4M.5 7.500h15M.5 12.500h15M4.500 5.500v10M12.500 5.500v10" stroke="#4d4d4d" fill="none"/><rect x="4.500" y="7.500" width="8" height="5" fill="#6db3ee" stroke="#1e82d4"/><path d="M3.500 2h9.500M3.500 .8v2.400M13 .8v2.400" stroke="#1e82d4" stroke-width="1.100"/></svg>
<svg class="tx" width="1" height="1"><text x="979.6" y="146" font-family="Liberation Sans, sans-serif" font-size="11.7" letter-spacing="0.00" fill="#222" textLength="43.40" lengthAdjust="spacingAndGlyphs">Formato</text></svg>
<svg style="position:absolute;left:1027.0px;top:139.7px" width="7.2" height="4.6" viewBox="0 0 7.2 4.6" fill="none"><path d="M1 1 L3.6 3.6 L6.2 1" stroke="#333" stroke-width="1.3" stroke-linecap="round" stroke-linejoin="round"/></svg>
<svg class="tx" width="1" height="1"><text x="984.4" y="167" font-family="Liberation Sans, sans-serif" font-size="10.8" letter-spacing="0.00" fill="#222" textLength="33.10" lengthAdjust="spacingAndGlyphs">Celdas</text></svg>
<div class="" style="position:absolute;left:1054px;top:78px;width:1px;height:89px;background:#d1d1d1;"></div>
<svg style="position:absolute;left:1068px;top:81px;" width="14" height="16" viewBox="0 0 14 16" fill="none"><path d="M12.500 3V1.200H1.600L8 8l-6.400 6.800h10.900V13" stroke="#333" stroke-width="1.200" fill="none" stroke-linejoin="round"/></svg>
<svg style="position:absolute;left:1089.9px;top:87.2px" width="7.2" height="4.6" viewBox="0 0 7.2 4.6" fill="none"><path d="M1 1 L3.6 3.6 L6.2 1" stroke="#333" stroke-width="1.3" stroke-linecap="round" stroke-linejoin="round"/></svg>
<svg style="position:absolute;left:1067px;top:108px;" width="16" height="14" viewBox="0 0 16 14" fill="none"><rect x=".5" y=".5" width="15" height="13" stroke="#4d4d4d" stroke-width="1" fill="#f8f8f8"/><path d="M.5 2.500h15" stroke="#4d4d4d" stroke-width="1"/><path d="M8 4.800v6.200M5.400 8.600L8 11.200l2.600-2.600" stroke="#1e8ad6" stroke-width="1.300" fill="none" stroke-linecap="round" stroke-linejoin="round"/></svg>
<svg style="position:absolute;left:1088.4px;top:113.0px" width="7.2" height="4.6" viewBox="0 0 7.2 4.6" fill="none"><path d="M1 1 L3.6 3.6 L6.2 1" stroke="#333" stroke-width="1.3" stroke-linecap="round" stroke-linejoin="round"/></svg>
<svg style="position:absolute;left:1066px;top:132px;" width="18" height="18" viewBox="0 0 18 18" fill="none"><path d="M9.800 1.200l6 6-7.200 8.200H5.400L1.200 11z" fill="#fff" stroke="#a33ab5" stroke-width="1.300" stroke-linejoin="round"/><path d="M1.200 11l4.200-4.600 4.800 5-3 4H5.400z" fill="#c67bd3" stroke="#a33ab5" stroke-width="1.200" stroke-linejoin="round"/></svg>
<svg style="position:absolute;left:1088.4px;top:139.0px" width="7.2" height="4.6" viewBox="0 0 7.2 4.6" fill="none"><path d="M1 1 L3.6 3.6 L6.2 1" stroke="#333" stroke-width="1.3" stroke-linecap="round" stroke-linejoin="round"/></svg>
<svg class="tx" width="1" height="1"><text x="1118.8" y="95" font-family="Liberation Sans, sans-serif" font-size="16" letter-spacing="-0.07" fill="#1e8ad6">A</text></svg>
<svg class="tx" width="1" height="1"><text x="1119.0" y="109" font-family="Liberation Sans, sans-serif" font-size="16" letter-spacing="-0.37" fill="#3a3a3a">Z</text></svg>
<svg style="position:absolute;left:1130px;top:88px;" width="18" height="18" viewBox="0 0 18 18" fill="none"><path d="M1.200 1.200h15.600v1.600l-5.800 6v7.400H7v-7.400l-5.800-6z" stroke="#3a3a3a" stroke-width="1.200" fill="#fff" stroke-linejoin="round"/></svg>
<svg class="tx" width="1" height="1"><text x="1107.4" y="127" font-family="Liberation Sans, sans-serif" font-size="11.7" letter-spacing="0.00" fill="#222" textLength="51.10" lengthAdjust="spacingAndGlyphs">Ordenar y</text></svg>
<svg class="tx" width="1" height="1"><text x="1114.0" y="143" font-family="Liberation Sans, sans-serif" font-size="12.51" letter-spacing="0.00" fill="#222">filtrar</text></svg>
<svg style="position:absolute;left:1145.0px;top:137.0px" width="7.2" height="4.6" viewBox="0 0 7.2 4.6" fill="none"><path d="M1 1 L3.6 3.6 L6.2 1" stroke="#333" stroke-width="1.3" stroke-linecap="round" stroke-linejoin="round"/></svg>
<svg style="position:absolute;left:1185px;top:81px;" width="32" height="31" viewBox="0 0 32 31" fill="none"><circle cx="19.400" cy="11.400" r="9.900" stroke="#3a3a3a" stroke-width="1.200" fill="#fff"/><path d="M12.300 18.600L1.400 29.200" stroke="#3a3a3a" stroke-width="1.200" stroke-linecap="round"/></svg>
<svg class="tx" width="1" height="1"><text x="1179.3" y="127" font-family="Liberation Sans, sans-serif" font-size="11.7" letter-spacing="0.00" fill="#222" textLength="43.50" lengthAdjust="spacingAndGlyphs">Buscar y</text></svg>
<svg class="tx" width="1" height="1"><text x="1166.0" y="143" font-family="Liberation Sans, sans-serif" font-size="11.7" letter-spacing="0.00" fill="#222" textLength="58.70" lengthAdjust="spacingAndGlyphs">seleccionar</text></svg>
<svg style="position:absolute;left:1228.2px;top:137.0px" width="7.2" height="4.6" viewBox="0 0 7.2 4.6" fill="none"><path d="M1 1 L3.6 3.6 L6.2 1" stroke="#333" stroke-width="1.3" stroke-linecap="round" stroke-linejoin="round"/></svg>
<svg class="tx" width="1" height="1"><text x="1132.4" y="167" font-family="Liberation Sans, sans-serif" font-size="11.28" letter-spacing="0.00" fill="#222">Edición</text></svg>
<div class="" style="position:absolute;left:1246px;top:78px;width:1px;height:89px;background:#d1d1d1;"></div>
<svg style="position:absolute;left:1262px;top:80px;" width="33" height="33" viewBox="0 0 33 33" fill="none"><rect x=".6" y=".6" width="31" height="31" fill="#f4f4f4" stroke="#444" stroke-width="1.200"/><rect x=".6" y=".6" width="31" height="4.600" fill="#c8c8c8" stroke="#444" stroke-width="1"/><path d="M.6 11h31M.6 17h31M.6 23.500h31M11 5v26.600M21.500 5v26.600" stroke="#b9b9b9" stroke-width="1.400"/><circle cx="14.800" cy="13" r="9.600" fill="#fff" stroke="#fff" stroke-width="3"/><circle cx="14.800" cy="13" r="9.600" fill="#fff" stroke="#444" stroke-width="1.200"/><rect x="9.600" y="12" width="3" height="6" fill="#c8c8c8" stroke="#999" stroke-width=".6"/><rect x="13.200" y="7.500" width="3" height="10.500" fill="#fff" stroke="#444" stroke-width=".9"/><rect x="16.800" y="9.500" width="3.200" height="8.500" fill="#3a96dd"/><path d="M21.600 20l10 11" stroke="#444" stroke-width="1.400" stroke-linecap="round"/></svg>
<svg class="tx" width="1" height="1"><text x="1257.3" y="127" font-family="Liberation Sans, sans-serif" font-size="11.7" letter-spacing="0.00" fill="#222" textLength="41.40" lengthAdjust="spacingAndGlyphs">Analizar</text></svg>
<svg class="tx" width="1" height="1"><text x="1264.4" y="143" font-family="Liberation Sans, sans-serif" font-size="11.7" letter-spacing="0.00" fill="#222" textLength="28.60" lengthAdjust="spacingAndGlyphs">datos</text></svg>
<svg class="tx" width="1" height="1"><text x="1259.4" y="167" font-family="Liberation Sans, sans-serif" font-size="11.0" letter-spacing="-0.00" fill="#222">Análisis</text></svg>
<div class="" style="position:absolute;left:1309px;top:78px;width:1px;height:89px;background:#d1d1d1;"></div>
<svg style="position:absolute;left:1334.8px;top:156.6px" width="11.5" height="6.8" viewBox="0 0 11.5 6.8" fill="none"><path d="M1 1 L5.75 5.8 L10.5 1" stroke="#333" stroke-width="1.3" stroke-linecap="round" stroke-linejoin="round"/></svg>
<div class="" style="position:absolute;left:0px;top:214px;width:1362px;height:451px;background:#e6e6e6;"></div>
<div class="" style="position:absolute;left:23px;top:234px;width:1318px;height:431px;background:#fff;overflow:hidden;"></div>
<div class="" style="position:absolute;left:23px;top:234px;width:1318px;height:431px;overflow:hidden;"><div style="position:absolute;left:0;top:19px;width:1318px;height:1px;background:#e1e1e1"></div><div style="position:absolute;left:0;top:39px;width:1318px;height:1px;background:#e1e1e1"></div><div style="position:absolute;left:0;top:59px;width:1318px;height:1px;background:#e1e1e1"></div><div style="position:absolute;left:0;top:79px;width:1318px;height:1px;background:#e1e1e1"></div><div style="position:absolute;left:0;top:99px;width:1318px;height:1px;background:#e1e1e1"></div><div style="position:absolute;left:0;top:119px;width:1318px;height:1px;background:#e1e1e1"></div><div style="position:absolute;left:0;top:139px;width:1318px;height:1px;background:#e1e1e1"></div><div style="position:absolute;left:0;top:159px;width:1318px;height:1px;background:#e1e1e1"></div><div style="position:absolute;left:0;top:179px;width:1318px;height:1px;background:#e1e1e1"></div><div style="position:absolute;left:0;top:199px;width:1318px;height:1px;background:#e1e1e1"></div><div style="position:absolute;left:0;top:219px;width:1318px;height:1px;background:#e1e1e1"></div><div style="position:absolute;left:0;top:239px;width:1318px;height:1px;background:#e1e1e1"></div><div style="position:absolute;left:0;top:259px;width:1318px;height:1px;background:#e1e1e1"></div><div style="position:absolute;left:0;top:279px;width:1318px;height:1px;background:#e1e1e1"></div><div style="position:absolute;left:0;top:299px;width:1318px;height:1px;background:#e1e1e1"></div><div style="position:absolute;left:0;top:319px;width:1318px;height:1px;background:#e1e1e1"></div><div style="position:absolute;left:0;top:339px;width:1318px;height:1px;background:#e1e1e1"></div><div style="position:absolute;left:0;top:359px;width:1318px;height:1px;background:#e1e1e1"></div><div style="position:absolute;left:0;top:379px;width:1318px;height:1px;background:#e1e1e1"></div><div style="position:absolute;left:0;top:399px;width:1318px;height:1px;background:#e1e1e1"></div><div style="position:absolute;left:0;top:419px;width:1318px;height:1px;background:#e1e1e1"></div><div style="position:absolute;left:0;top:439px;width:1318px;height:1px;background:#e1e1e1"></div><div style="position:absolute;left:45px;top:0;width:1px;height:431px;background:#e1e1e1"></div><div style="position:absolute;left:114px;top:0;width:1px;height:431px;background:#e1e1e1"></div><div style="position:absolute;left:238px;top:0;width:1px;height:431px;background:#e1e1e1"></div><div style="position:absolute;left:310px;top:0;width:1px;height:431px;background:#e1e1e1"></div><div style="position:absolute;left:357px;top:0;width:1px;height:431px;background:#e1e1e1"></div><div style="position:absolute;left:435px;top:0;width:1px;height:431px;background:#e1e1e1"></div><div style="position:absolute;left:515px;top:0;width:1px;height:431px;background:#e1e1e1"></div><div style="position:absolute;left:595px;top:0;width:1px;height:431px;background:#e1e1e1"></div><div style="position:absolute;left:675px;top:0;width:1px;height:431px;background:#e1e1e1"></div><div style="position:absolute;left:755px;top:0;width:1px;height:431px;background:#e1e1e1"></div><div style="position:absolute;left:835px;top:0;width:1px;height:431px;background:#e1e1e1"></div><div style="position:absolute;left:915px;top:0;width:1px;height:431px;background:#e1e1e1"></div><div style="position:absolute;left:995px;top:0;width:1px;height:431px;background:#e1e1e1"></div><div style="position:absolute;left:1075px;top:0;width:1px;height:431px;background:#e1e1e1"></div><div style="position:absolute;left:1155px;top:0;width:1px;height:431px;background:#e1e1e1"></div><div style="position:absolute;left:1235px;top:0;width:1px;height:431px;background:#e1e1e1"></div><div style="position:absolute;left:1315px;top:0;width:1px;height:431px;background:#e1e1e1"></div></div>
<div class="" style="position:absolute;left:0px;top:214px;width:1339px;height:20px;background:#f0f0f0;"></div>
<div class="" style="position:absolute;left:0px;top:233px;width:1341px;height:1px;background:#9f9f9f;"></div>
<svg class="tx" width="1" height="1"><text x="41.3" y="228" font-family="Liberation Sans, sans-serif" font-size="12.5" letter-spacing="0.00" fill="#2a2a2a">A</text></svg>
<svg class="tx" width="1" height="1"><text x="98.8" y="228" font-family="Liberation Sans, sans-serif" font-size="12.5" letter-spacing="0.00" fill="#2a2a2a">B</text></svg>
<svg class="tx" width="1" height="1"><text x="195.0" y="228" font-family="Liberation Sans, sans-serif" font-size="12.5" letter-spacing="0.00" fill="#2a2a2a">C</text></svg>
<svg class="tx" width="1" height="1"><text x="293.0" y="228" font-family="Liberation Sans, sans-serif" font-size="12.5" letter-spacing="-0.00" fill="#2a2a2a">D</text></svg>
<div class="" style="position:absolute;left:333px;top:214px;width:47px;height:19px;background:#d3d3d3;"></div>
<div class="" style="position:absolute;left:333px;top:232px;width:48px;height:2px;background:#107C41;"></div>
<svg class="tx" width="1" height="1"><text x="352.8" y="228" font-family="Liberation Sans, sans-serif" font-size="12.5" letter-spacing="-0.00" fill="#1a6b3c">E</text></svg>
<svg class="tx" width="1" height="1"><text x="415.7" y="228" font-family="Liberation Sans, sans-serif" font-size="12.5" letter-spacing="-0.00" fill="#2a2a2a">F</text></svg>
<svg class="tx" width="1" height="1"><text x="493.6" y="228" font-family="Liberation Sans, sans-serif" font-size="12.5" letter-spacing="0.00" fill="#2a2a2a">G</text></svg>
<svg class="tx" width="1" height="1"><text x="574.0" y="228" font-family="Liberation Sans, sans-serif" font-size="12.5" letter-spacing="-0.00" fill="#2a2a2a">H</text></svg>
<svg class="tx" width="1" height="1"><text x="656.8" y="228" font-family="Liberation Sans, sans-serif" font-size="12.5" letter-spacing="0.00" fill="#2a2a2a">I</text></svg>
<svg class="tx" width="1" height="1"><text x="735.4" y="228" font-family="Liberation Sans, sans-serif" font-size="12.5" letter-spacing="0.00" fill="#2a2a2a">J</text></svg>
<svg class="tx" width="1" height="1"><text x="814.3" y="228" font-family="Liberation Sans, sans-serif" font-size="12.5" letter-spacing="0.00" fill="#2a2a2a">K</text></svg>
<svg class="tx" width="1" height="1"><text x="895.0" y="228" font-family="Liberation Sans, sans-serif" font-size="12.5" letter-spacing="-0.00" fill="#2a2a2a">L</text></svg>
<svg class="tx" width="1" height="1"><text x="973.3" y="228" font-family="Liberation Sans, sans-serif" font-size="12.5" letter-spacing="-0.00" fill="#2a2a2a">M</text></svg>
<svg class="tx" width="1" height="1"><text x="1054.0" y="228" font-family="Liberation Sans, sans-serif" font-size="12.5" letter-spacing="0.00" fill="#2a2a2a">N</text></svg>
<svg class="tx" width="1" height="1"><text x="1133.6" y="228" font-family="Liberation Sans, sans-serif" font-size="12.5" letter-spacing="-0.00" fill="#2a2a2a">O</text></svg>
<svg class="tx" width="1" height="1"><text x="1214.3" y="228" font-family="Liberation Sans, sans-serif" font-size="12.5" letter-spacing="0.00" fill="#2a2a2a">P</text></svg>
<svg class="tx" width="1" height="1"><text x="1293.6" y="228" font-family="Liberation Sans, sans-serif" font-size="12.5" letter-spacing="-0.00" fill="#2a2a2a">Q</text></svg>
<div class="" style="position:absolute;left:22px;top:214px;width:1px;height:19px;background:#c9c9c9;"></div>
<div class="" style="position:absolute;left:68px;top:214px;width:1px;height:19px;background:#c9c9c9;"></div>
<div class="" style="position:absolute;left:137px;top:214px;width:1px;height:19px;background:#c9c9c9;"></div>
<div class="" style="position:absolute;left:261px;top:214px;width:1px;height:19px;background:#c9c9c9;"></div>
<div class="" style="position:absolute;left:333px;top:214px;width:1px;height:19px;background:#c9c9c9;"></div>
<div class="" style="position:absolute;left:380px;top:214px;width:1px;height:19px;background:#c9c9c9;"></div>
<div class="" style="position:absolute;left:458px;top:214px;width:1px;height:19px;background:#c9c9c9;"></div>
<div class="" style="position:absolute;left:538px;top:214px;width:1px;height:19px;background:#c9c9c9;"></div>
<div class="" style="position:absolute;left:618px;top:214px;width:1px;height:19px;background:#c9c9c9;"></div>
<div class="" style="position:absolute;left:698px;top:214px;width:1px;height:19px;background:#c9c9c9;"></div>
<div class="" style="position:absolute;left:778px;top:214px;width:1px;height:19px;background:#c9c9c9;"></div>
<div class="" style="position:absolute;left:858px;top:214px;width:1px;height:19px;background:#c9c9c9;"></div>
<div class="" style="position:absolute;left:938px;top:214px;width:1px;height:19px;background:#c9c9c9;"></div>
<div class="" style="position:absolute;left:1018px;top:214px;width:1px;height:19px;background:#c9c9c9;"></div>
<div class="" style="position:absolute;left:1098px;top:214px;width:1px;height:19px;background:#c9c9c9;"></div>
<div class="" style="position:absolute;left:1178px;top:214px;width:1px;height:19px;background:#c9c9c9;"></div>
<div class="" style="position:absolute;left:1258px;top:214px;width:1px;height:19px;background:#c9c9c9;"></div>
<div class="" style="position:absolute;left:1338px;top:214px;width:1px;height:19px;background:#c9c9c9;"></div>
<div class="" style="position:absolute;left:1341px;top:233px;width:1px;height:432px;background:#a6a6a6;"></div>
<svg style="position:absolute;left:5px;top:218px;" width="16" height="15" viewBox="0 0 16 15" fill="none"><path d="M14.500 1.500v12h-12z" fill="#b8b8b8"/></svg>
<div class="" style="position:absolute;left:0px;top:234px;width:22px;height:431px;background:#f0f0f0;overflow:hidden;"></div>
<div class="" style="position:absolute;left:22px;top:234px;width:1px;height:431px;background:#9f9f9f;"></div>
<svg class="tx" width="1" height="1"><text x="6.0" y="249" font-family="Liberation Sans, sans-serif" font-size="12.5" letter-spacing="0.00" fill="#2a2a2a">1</text></svg>
<div class="" style="position:absolute;left:0px;top:253px;width:22px;height:1px;background:#ababab;"></div>
<svg class="tx" width="1" height="1"><text x="6.0" y="269" font-family="Liberation Sans, sans-serif" font-size="12.5" letter-spacing="0.00" fill="#2a2a2a">2</text></svg>
<div class="" style="position:absolute;left:0px;top:273px;width:22px;height:1px;background:#ababab;"></div>
<svg class="tx" width="1" height="1"><text x="6.0" y="289" font-family="Liberation Sans, sans-serif" font-size="12.5" letter-spacing="0.00" fill="#2a2a2a">3</text></svg>
<div class="" style="position:absolute;left:0px;top:293px;width:22px;height:1px;background:#ababab;"></div>
<div class="" style="position:absolute;left:0px;top:294px;width:22px;height:19px;background:#d3d3d3;"></div>
<div class="" style="position:absolute;left:21px;top:293px;width:2px;height:21px;background:#107C41;"></div>
<svg class="tx" width="1" height="1"><text x="6.0" y="309" font-family="Liberation Sans, sans-serif" font-size="12.5" letter-spacing="0.00" fill="#1a6b3c">4</text></svg>
<div class="" style="position:absolute;left:0px;top:313px;width:22px;height:1px;background:#ababab;"></div>
<svg class="tx" width="1" height="1"><text x="6.0" y="329" font-family="Liberation Sans, sans-serif" font-size="12.5" letter-spacing="0.00" fill="#2a2a2a">5</text></svg>
<div class="" style="position:absolute;left:0px;top:333px;width:22px;height:1px;background:#ababab;"></div>
<svg class="tx" width="1" height="1"><text x="6.0" y="349" font-family="Liberation Sans, sans-serif" font-size="12.5" letter-spacing="0.00" fill="#2a2a2a">6</text></svg>
<div class="" style="position:absolute;left:0px;top:353px;width:22px;height:1px;background:#ababab;"></div>
<svg class="tx" width="1" height="1"><text x="6.0" y="369" font-family="Liberation Sans, sans-serif" font-size="12.5" letter-spacing="0.00" fill="#2a2a2a">7</text></svg>
<div class="" style="position:absolute;left:0px;top:373px;width:22px;height:1px;background:#ababab;"></div>
<svg class="tx" width="1" height="1"><text x="6.0" y="389" font-family="Liberation Sans, sans-serif" font-size="12.5" letter-spacing="0.00" fill="#2a2a2a">8</text></svg>
<div class="" style="position:absolute;left:0px;top:393px;width:22px;height:1px;background:#ababab;"></div>
<svg class="tx" width="1" height="1"><text x="6.0" y="409" font-family="Liberation Sans, sans-serif" font-size="12.5" letter-spacing="0.00" fill="#2a2a2a">9</text></svg>
<div class="" style="position:absolute;left:0px;top:413px;width:22px;height:1px;background:#ababab;"></div>
<svg class="tx" width="1" height="1"><text x="3.8" y="429" font-family="Liberation Sans, sans-serif" font-size="12.5" letter-spacing="-0.49" fill="#2a2a2a">10</text></svg>
<div class="" style="position:absolute;left:0px;top:433px;width:22px;height:1px;background:#ababab;"></div>
<svg class="tx" width="1" height="1"><text x="4.3" y="449" font-family="Liberation Sans, sans-serif" font-size="12.5" letter-spacing="-0.45" fill="#2a2a2a">11</text></svg>
<div class="" style="position:absolute;left:0px;top:453px;width:22px;height:1px;background:#ababab;"></div>
<svg class="tx" width="1" height="1"><text x="3.8" y="469" font-family="Liberation Sans, sans-serif" font-size="12.5" letter-spacing="-0.49" fill="#2a2a2a">12</text></svg>
<div class="" style="position:absolute;left:0px;top:473px;width:22px;height:1px;background:#ababab;"></div>
<svg class="tx" width="1" height="1"><text x="3.8" y="489" font-family="Liberation Sans, sans-serif" font-size="12.5" letter-spacing="-0.49" fill="#2a2a2a">13</text></svg>
<div class="" style="position:absolute;left:0px;top:493px;width:22px;height:1px;background:#ababab;"></div>
<svg class="tx" width="1" height="1"><text x="3.8" y="509" font-family="Liberation Sans, sans-serif" font-size="12.5" letter-spacing="-0.49" fill="#2a2a2a">14</text></svg>
<div class="" style="position:absolute;left:0px;top:513px;width:22px;height:1px;background:#ababab;"></div>
<svg class="tx" width="1" height="1"><text x="3.8" y="529" font-family="Liberation Sans, sans-serif" font-size="12.5" letter-spacing="-0.49" fill="#2a2a2a">15</text></svg>
<div class="" style="position:absolute;left:0px;top:533px;width:22px;height:1px;background:#ababab;"></div>
<svg class="tx" width="1" height="1"><text x="3.8" y="549" font-family="Liberation Sans, sans-serif" font-size="12.5" letter-spacing="-0.49" fill="#2a2a2a">16</text></svg>
<div class="" style="position:absolute;left:0px;top:553px;width:22px;height:1px;background:#ababab;"></div>
<svg class="tx" width="1" height="1"><text x="3.8" y="569" font-family="Liberation Sans, sans-serif" font-size="12.5" letter-spacing="-0.49" fill="#2a2a2a">17</text></svg>
<div class="" style="position:absolute;left:0px;top:573px;width:22px;height:1px;background:#ababab;"></div>
<svg class="tx" width="1" height="1"><text x="3.8" y="589" font-family="Liberation Sans, sans-serif" font-size="12.5" letter-spacing="-0.49" fill="#2a2a2a">18</text></svg>
<div class="" style="position:absolute;left:0px;top:593px;width:22px;height:1px;background:#ababab;"></div>
<svg class="tx" width="1" height="1"><text x="3.8" y="609" font-family="Liberation Sans, sans-serif" font-size="12.5" letter-spacing="-0.49" fill="#2a2a2a">19</text></svg>
<div class="" style="position:absolute;left:0px;top:613px;width:22px;height:1px;background:#ababab;"></div>
<svg class="tx" width="1" height="1"><text x="3.8" y="629" font-family="Liberation Sans, sans-serif" font-size="12.5" letter-spacing="-0.49" fill="#2a2a2a">20</text></svg>
<div class="" style="position:absolute;left:0px;top:633px;width:22px;height:1px;background:#ababab;"></div>
<svg class="tx" width="1" height="1"><text x="3.8" y="649" font-family="Liberation Sans, sans-serif" font-size="12.5" letter-spacing="-0.49" fill="#2a2a2a">21</text></svg>
<div class="" style="position:absolute;left:0px;top:653px;width:22px;height:1px;background:#ababab;"></div>
<div style="position:absolute;left:0;top:654px;width:22px;height:11px;overflow:hidden"><svg class="tx" style="top:-654px" width="1" height="1"><text x="4.0" y="669" font-family="Liberation Sans, sans-serif" font-size="12.5" letter-spacing="-0.65" fill="#2a2a2a">22</text></svg></div>
<div class="" style="position:absolute;left:0px;top:673px;width:22px;height:1px;background:#ababab;"></div>
<svg class="tx" width="1" height="1"><text x="25.7" y="249" font-family="Liberation Sans, sans-serif" font-size="13.3" letter-spacing="0.00" fill="#000" font-weight="bold" textLength="18.80" lengthAdjust="spacingAndGlyphs">Plu</text></svg>
<svg class="tx" width="1" height="1"><text x="71.6" y="249" font-family="Liberation Sans, sans-serif" font-size="13.3" letter-spacing="0.00" fill="#000" font-weight="bold" textLength="49.40" lengthAdjust="spacingAndGlyphs">Nombre</text></svg>
<svg class="tx" width="1" height="1"><text x="140.3" y="249" font-family="Liberation Sans, sans-serif" font-size="13.3" letter-spacing="0.00" fill="#000" font-weight="bold" textLength="115.50" lengthAdjust="spacingAndGlyphs">Categoría principal</text></svg>
<svg class="tx" width="1" height="1"><text x="264.6" y="249" font-family="Liberation Sans, sans-serif" font-size="13.3" letter-spacing="0.00" fill="#000" font-weight="bold" textLength="64.20" lengthAdjust="spacingAndGlyphs">Categorías</text></svg>
<svg class="tx" width="1" height="1"><text x="336.4" y="249" font-family="Liberation Sans, sans-serif" font-size="13.3" letter-spacing="0.00" fill="#000" font-weight="bold" textLength="38.40" lengthAdjust="spacingAndGlyphs">Precio</text></svg>
<svg class="tx" width="1" height="1"><text x="382.7" y="249" font-family="Liberation Sans, sans-serif" font-size="13.3" letter-spacing="0.00" fill="#000" font-weight="bold" textLength="71.10" lengthAdjust="spacingAndGlyphs">Descripción</text></svg>
<svg class="tx" width="1" height="1"><text x="38.6" y="269" font-family="Liberation Sans, sans-serif" font-size="12.6" letter-spacing="0.00" fill="#000" textLength="26.90" lengthAdjust="spacingAndGlyphs">1234</text></svg>
<svg class="tx" width="1" height="1"><text x="71.6" y="269" font-family="Liberation Sans, sans-serif" font-size="12.73" letter-spacing="0.00" fill="#000">Pera</text></svg>
<svg class="tx" width="1" height="1"><text x="38.6" y="289" font-family="Liberation Sans, sans-serif" font-size="12.6" letter-spacing="0.00" fill="#000" textLength="26.90" lengthAdjust="spacingAndGlyphs">4321</text></svg>
<svg class="tx" width="1" height="1"><text x="71.6" y="289" font-family="Liberation Sans, sans-serif" font-size="13.13" letter-spacing="-0.00" fill="#000">Manzana</text></svg>
<svg class="tx" width="1" height="1"><text x="349.0" y="269" font-family="Liberation Sans, sans-serif" font-size="12.6" letter-spacing="0.00" fill="#000" textLength="27.60" lengthAdjust="spacingAndGlyphs">4200</text></svg>
<svg class="tx" width="1" height="1"><text x="349.0" y="289" font-family="Liberation Sans, sans-serif" font-size="12.6" letter-spacing="0.00" fill="#000" textLength="27.60" lengthAdjust="spacingAndGlyphs">4800</text></svg>
<div class="" style="position:absolute;left:332px;top:292.5px;width:46px;height:19.5px;border:2px solid #107C41;"></div>
<div class="" style="position:absolute;left:377px;top:310.5px;width:6px;height:6px;background:#107C41;border:1px solid #fff;box-sizing:border-box;"></div>
<div class="" style="position:absolute;left:21px;top:234.5px;width:41.5px;height:70.5px;border:3px solid #f62e6e;border-radius:6px;box-shadow:0 0 5px rgba(0,0,0,.5), inset 0 0 6px rgba(0,0,0,.55);"></div>
<div class="" style="position:absolute;left:68.5px;top:234.5px;width:63.5px;height:70.5px;border:3px solid #f62e6e;border-radius:6px;box-shadow:0 0 5px rgba(0,0,0,.5), inset 0 0 6px rgba(0,0,0,.55);"></div>
<div class="" style="position:absolute;left:333px;top:234.5px;width:43.7px;height:70px;border:3px solid #f62e6e;border-radius:6px;box-shadow:0 0 5px rgba(0,0,0,.5), inset 0 0 6px rgba(0,0,0,.55);"></div>
<div class="" style="position:absolute;left:1342px;top:214px;width:20px;height:451px;background:linear-gradient(180deg,#ece5e3 0,#e8e5e4 80px,#e6e6e6 200px);"></div>
<div class="" style="position:absolute;left:1344px;top:214px;width:24px;height:454px;background:#f5f5f5;border-radius:9px;"></div>
<svg style="position:absolute;left:1347.5px;top:218.5px;" width="10" height="8" viewBox="0 0 10 8" fill="none"><path d="M5 .8L9.400 7H.6z" fill="#767676"/></svg>
<div class="" style="position:absolute;left:1348.2px;top:230.5px;width:8.8px;height:400px;background:#747474;border-radius:4.500px;"></div>
<svg style="position:absolute;left:1347.5px;top:656px;" width="10" height="8" viewBox="0 0 10 8" fill="none"><path d="M.6 .8h8.800L5 7z" fill="#767676"/></svg>
<div class="" style="position:absolute;left:0px;top:665px;width:1362px;height:28.5px;background:linear-gradient(90deg,#ebe4e2 0%,#e7e6e6 6%,#e6e6e6 100%);"></div>
<div class="" style="position:absolute;left:0px;top:665px;width:1342px;height:1px;background:#a6a6a6;"></div>
<div class="" style="position:absolute;left:97.5px;top:665px;width:59px;height:24.5px;background:#fff;"></div>
<div class="" style="position:absolute;left:97px;top:665px;width:1px;height:23px;background:#b8b8b8;"></div>
<div class="" style="position:absolute;left:156px;top:665px;width:1px;height:23px;background:#b8b8b8;"></div>
<div class="" style="position:absolute;left:97px;top:687.6px;width:59.8px;height:2.2px;background:#107C41;"></div>
<svg class="tx" width="1" height="1"><text x="109.3" y="683" font-family="Liberation Sans, sans-serif" font-size="12.74" letter-spacing="0.00" fill="#1a6b3c" font-weight="bold">Hoja1</text></svg>
<svg style="position:absolute;left:23px;top:674px;" width="6" height="9" viewBox="0 0 6 9" fill="none"><path d="M5.200 .8v7.400L.8 4.500z" fill="#c2c2c2"/></svg>
<svg style="position:absolute;left:52px;top:674px;" width="6" height="9" viewBox="0 0 6 9" fill="none"><path d="M.8 .8v7.400l4.400-3.700z" fill="#c2c2c2"/></svg>
<svg style="position:absolute;left:189px;top:670px;" width="18" height="18" viewBox="0 0 18 18" fill="none"><circle cx="9" cy="8.800" r="7.700" stroke="#8a8a8a" stroke-width="1.100"/><path d="M9 4.800v8M5 8.800h8" stroke="#666" stroke-width="1.400"/></svg>
<div class="" style="position:absolute;left:816.1px;top:675.1px;width:1.8px;height:1.8px;background:#444;border-radius:50%;"></div>
<div class="" style="position:absolute;left:816.1px;top:679.1px;width:1.8px;height:1.8px;background:#444;border-radius:50%;"></div>
<div class="" style="position:absolute;left:816.1px;top:683.1px;width:1.8px;height:1.8px;background:#444;border-radius:50%;"></div>
<div class="" style="position:absolute;left:831px;top:670.5px;width:513px;height:16.5px;background:#f3f3f3;border-radius:8.500px;"></div>
<svg style="position:absolute;left:835px;top:673.5px;" width="9" height="10" viewBox="0 0 9 10" fill="none"><path d="M7.800 .8v8.400L.8 5z" fill="#6e6e6e"/></svg>
<div class="" style="position:absolute;left:848.5px;top:674px;width:448.5px;height:9px;background:#747474;border-radius:4.500px;"></div>
<svg style="position:absolute;left:1331.5px;top:673.5px;" width="9" height="10" viewBox="0 0 9 10" fill="none"><path d="M1 .8v8.400L8 5z" fill="#6e6e6e"/></svg>
<div class="" style="position:absolute;left:0px;top:693px;width:1362px;height:22px;background:#f5f5f5;border-top:1px solid #bcbcbc;box-sizing:border-box;"></div>
<svg class="tx" width="1" height="1"><text x="5.3" y="708" font-family="Liberation Sans, sans-serif" font-size="10.84" letter-spacing="0.00" fill="#222">Listo</text></svg>
<svg style="position:absolute;left:74px;top:696px;" width="16" height="17" viewBox="0 0 16 17" fill="none"><circle cx="7" cy="2.600" r="1.800" stroke="#333" stroke-width="1"/><path d="M1.300 4.200c-.8.500-.6 1.600.300 1.900l3.200 1v2.600L3.200 14.600c-.3.900.9 1.500 1.500.600L7 10.800M12.700 4.200c.8.500.6 1.600-.3 1.900l-3.200 1v3.200M1.300 4.200c1.800.900 3.600 1.400 5.700 1.400s3.900-.5 5.700-1.400" stroke="#333" stroke-width="1" stroke-linecap="round" stroke-linejoin="round" fill="none"/><path d="M8.800 13l2.200 2.200 4-4.600" stroke="#333" stroke-width="1.100" fill="none" stroke-linecap="round" stroke-linejoin="round"/></svg>
<svg class="tx" width="1" height="1"><text x="92.2" y="709" font-family="Liberation Sans, sans-serif" font-size="11.63" letter-spacing="-0.00" fill="#222">Accesibilidad: todo correcto</text></svg>
<div class="" style="position:absolute;left:1063px;top:694.4px;width:40px;height:20.8px;background:#dcdcdc;"></div>
<svg style="position:absolute;left:1075.5px;top:697px;" width="14" height="14" viewBox="0 0 14 14" fill="none"><path d="M.8 .8h12.400v12.400H.8zM.8 5h12.400M.8 9.100h12.400M4.900 .8v12.400M9.100 .8v12.400" stroke="#333" stroke-width="1.200" fill="none"/></svg>
<svg style="position:absolute;left:1116px;top:697px;" width="15" height="14" viewBox="0 0 15 14" fill="none"><rect x=".8" y=".8" width="13" height="12.400" stroke="#333" stroke-width="1.200" fill="none"/><rect x="3.600" y="3.400" width="7.400" height="7.200" stroke="#333" stroke-width="1" fill="none"/><path d="M5.200 5.800h4.200M5.200 8.200h4.200" stroke="#333" stroke-width="1"/></svg>
<svg style="position:absolute;left:1155.5px;top:697px;" width="15" height="14" viewBox="0 0 15 14" fill="none"><path d="M.8 .8h13v12.400H.8z" stroke="#333" stroke-width="1.200" fill="none"/><path d="M4.800 .8v6.600h4.600V.8" stroke="#333" stroke-width="1.200" fill="none"/></svg>
<div class="" style="position:absolute;left:1189px;top:702.8px;width:7.6px;height:1.2px;background:#444;"></div>
<div class="" style="position:absolute;left:1202px;top:703.1px;width:100px;height:1px;background:#8a8a8a;"></div>
<div class="" style="position:absolute;left:1249.8px;top:698.5px;width:5px;height:11.5px;background:#6a6a6a;"></div>
<div class="" style="position:absolute;left:1306.6px;top:702.8px;width:8.4px;height:1.2px;background:#444;"></div>
<div class="" style="position:absolute;left:1310.2px;top:699.2px;width:1.2px;height:8.4px;background:#444;"></div>
<svg class="tx" width="1" height="1"><text x="1328.4" y="709" font-family="Liberation Sans, sans-serif" font-size="10.8" letter-spacing="0.00" fill="#222" textLength="26.30" lengthAdjust="spacingAndGlyphs">100%</text></svg>
<div class="" style="position:absolute;left:0px;top:715px;width:1362px;height:43px;background:#1f1f1f;overflow:hidden;"></div>
<div class="" style="position:absolute;left:0px;top:715px;width:220px;height:43px;background:linear-gradient(90deg,#1f1c1d 0px,#2b171a 30px,#43131b 58px,#52111c 82px,#55111c 104px,#3c1419 130px,#2a191b 160px,#1f1f1f 215px);"></div>
<div class="" style="position:absolute;left:0px;top:715px;width:1362px;height:1px;background:rgba(0,0,0,.35);"></div>
<div class="" style="position:absolute;left:18px;top:728px;width:11px;height:11px;background:linear-gradient(135deg,#6bd6ff,#37b6f8);"></div>
<div class="" style="position:absolute;left:30px;top:728px;width:11px;height:11px;background:linear-gradient(135deg,#4cc4fb,#22a6f4);"></div>
<div class="" style="position:absolute;left:18px;top:740px;width:11px;height:11px;background:linear-gradient(135deg,#45bffa,#1f9ef2);"></div>
<div class="" style="position:absolute;left:30px;top:740px;width:11px;height:11px;background:linear-gradient(135deg,#2aa9f5,#0c8ae8);"></div>
<svg style="position:absolute;left:62px;top:726px;" width="25" height="26" viewBox="0 0 25 26" fill="none"><circle cx="13.500" cy="11" r="8.300" stroke="#f2f2f2" stroke-width="2" fill="rgba(255,255,255,.2)"/><path d="M7.600 17.200L2.200 23.200" stroke="#f2f2f2" stroke-width="2.600" stroke-linecap="round"/></svg>
<div style="position:absolute;left:104px;top:718px;width:1258px;height:40px;overflow:hidden">
<div class="" style="position:absolute;left:3.0px;top:6.0px;width:26px;height:24px;background:#bdbdbd;border-radius:30%;filter:blur(5px);opacity:0.86;"></div>
<div class="" style="position:absolute;left:42.0px;top:13.0px;width:28px;height:22px;background:#2ea2e6;border-radius:50%;filter:blur(5px);opacity:0.86;"></div>
<div class="" style="position:absolute;left:54.0px;top:2.0px;width:24px;height:18px;background:#c244c8;border-radius:50%;filter:blur(5px);opacity:0.86;"></div>
<div class="" style="position:absolute;left:89.0px;top:14.0px;width:24px;height:20px;background:#e04458;border-radius:50%;filter:blur(5px);opacity:0.86;"></div>
<div class="" style="position:absolute;left:96.0px;top:9.0px;width:16px;height:8px;background:#c9a040;border-radius:50%;filter:blur(5px);opacity:0.86;"></div>
<div class="" style="position:absolute;left:133.0px;top:12.0px;width:26px;height:20px;background:#6264c4;border-radius:50%;filter:blur(5px);opacity:0.86;"></div>
<div class="" style="position:absolute;left:153.0px;top:7.0px;width:10px;height:8px;background:#7da83c;border-radius:50%;filter:blur(4px);opacity:0.86;"></div>
<div class="" style="position:absolute;left:178.0px;top:9.0px;width:26px;height:22px;background:#1380d2;border-radius:50%;filter:blur(5px);opacity:0.86;"></div>
<div class="" style="position:absolute;left:222.0px;top:8.0px;width:26px;height:20px;background:#e2b23e;border-radius:30%;filter:blur(5px);opacity:0.86;"></div>
<div class="" style="position:absolute;left:224.0px;top:27.0px;width:22px;height:6px;background:#3a8ad0;border-radius:30%;filter:blur(4px);opacity:0.86;"></div>
<div class="" style="position:absolute;left:266.5px;top:7.0px;width:24px;height:26px;background:#e2c000;border-radius:30%;filter:blur(5px);opacity:0.86;"></div>
<div class="" style="position:absolute;left:307.0px;top:9.0px;width:26px;height:24px;background:#0f86cc;border-radius:50%;filter:blur(5px);opacity:0.86;"></div>
<div class="" style="position:absolute;left:324.0px;top:8.0px;width:12px;height:14px;background:#2aa070;border-radius:50%;filter:blur(5px);opacity:0.86;"></div>
<div class="" style="position:absolute;left:352.0px;top:8.0px;width:28px;height:26px;background:#f05a4c;border-radius:50%;filter:blur(5px);opacity:0.86;"></div>
<div class="" style="position:absolute;left:397.0px;top:9.0px;width:26px;height:24px;background:#e04c60;border-radius:50%;filter:blur(5px);opacity:0.86;"></div>
<div class="" style="position:absolute;left:443.0px;top:8.0px;width:26px;height:24px;background:#9a3cb8;border-radius:50%;filter:blur(5px);opacity:0.86;"></div>
<div class="" style="position:absolute;left:487.0px;top:16.0px;width:20px;height:18px;background:#d8d8e0;border-radius:50%;filter:blur(5px);opacity:0.86;"></div>
<div class="" style="position:absolute;left:500.0px;top:3.0px;width:16px;height:14px;background:#d8262e;border-radius:50%;filter:blur(4px);opacity:0.86;"></div>
<div class="" style="position:absolute;left:529.0px;top:9.0px;width:26px;height:24px;background:#1e9644;border-radius:50%;filter:blur(5px);opacity:0.86;"></div>
<div class="" style="position:absolute;left:565px;top:0px;width:44px;height:40px;background:#2b2b2b;filter:blur(3px);"></div>
<div class="" style="position:absolute;left:573.0px;top:8.0px;width:28px;height:20px;background:#1e8a4c;border-radius:50%;filter:blur(5px);opacity:0.86;"></div>
<div class="" style="position:absolute;left:578.5px;top:38px;width:15px;height:2px;background:#f065f0;"></div>
<div class="" style="position:absolute;left:98.5px;top:39px;width:5.5px;height:1px;background:#c4c4c4;"></div>
<div class="" style="position:absolute;left:143.5px;top:39px;width:5.5px;height:1px;background:#c4c4c4;"></div>
<div class="" style="position:absolute;left:495.5px;top:39px;width:5.5px;height:1px;background:#c4c4c4;"></div>
<div class="" style="position:absolute;left:539.5px;top:39px;width:5.5px;height:1px;background:#c4c4c4;"></div>
<div class="" style="position:absolute;left:933.0px;top:16.0px;width:14px;height:10px;background:#3a3a3a;border-radius:50%;filter:blur(4px);opacity:0.86;"></div>
<div class="" style="position:absolute;left:956.0px;top:13.0px;width:16px;height:16px;background:#1474ba;border-radius:50%;filter:blur(4px);opacity:0.86;"></div>
<div class="" style="position:absolute;left:978.5px;top:16.0px;width:18px;height:12px;background:#b4b4b4;border-radius:50%;filter:blur(4px);opacity:0.86;"></div>
<div class="" style="position:absolute;left:1008.0px;top:15.0px;width:14px;height:16px;background:#94640f;border-radius:50%;filter:blur(4px);opacity:0.86;"></div>
<div class="" style="position:absolute;left:1036.0px;top:8.5px;width:22px;height:7px;background:#3c3c3c;border-radius:20%;filter:blur(3px);opacity:0.86;"></div>
<div class="" style="position:absolute;left:1036.0px;top:25.5px;width:22px;height:7px;background:#3a3a3a;border-radius:20%;filter:blur(3px);opacity:0.86;"></div>
<div class="" style="position:absolute;left:1075.0px;top:14.0px;width:16px;height:12px;background:#4a4a4a;border-radius:50%;filter:blur(4px);opacity:0.86;"></div>
<div class="" style="position:absolute;left:1100.0px;top:16.0px;width:14px;height:10px;background:#3a3a3a;border-radius:50%;filter:blur(4px);opacity:0.86;"></div>
<div class="" style="position:absolute;left:1123.0px;top:13.0px;width:18px;height:14px;background:#8e8e8e;border-radius:50%;filter:blur(4px);opacity:0.86;"></div>
<div class="" style="position:absolute;left:1160.0px;top:9.0px;width:52px;height:8px;background:#444;border-radius:20%;filter:blur(3px);opacity:0.86;"></div>
<div class="" style="position:absolute;left:1155.0px;top:25.0px;width:62px;height:8px;background:#404040;border-radius:20%;filter:blur(3px);opacity:0.86;"></div>
<div class="" style="position:absolute;left:1219.0px;top:8.5px;width:22px;height:24px;background:#a942b6;border-radius:25%;filter:blur(3px);opacity:0.86;"></div>
</div>
</body></html>
